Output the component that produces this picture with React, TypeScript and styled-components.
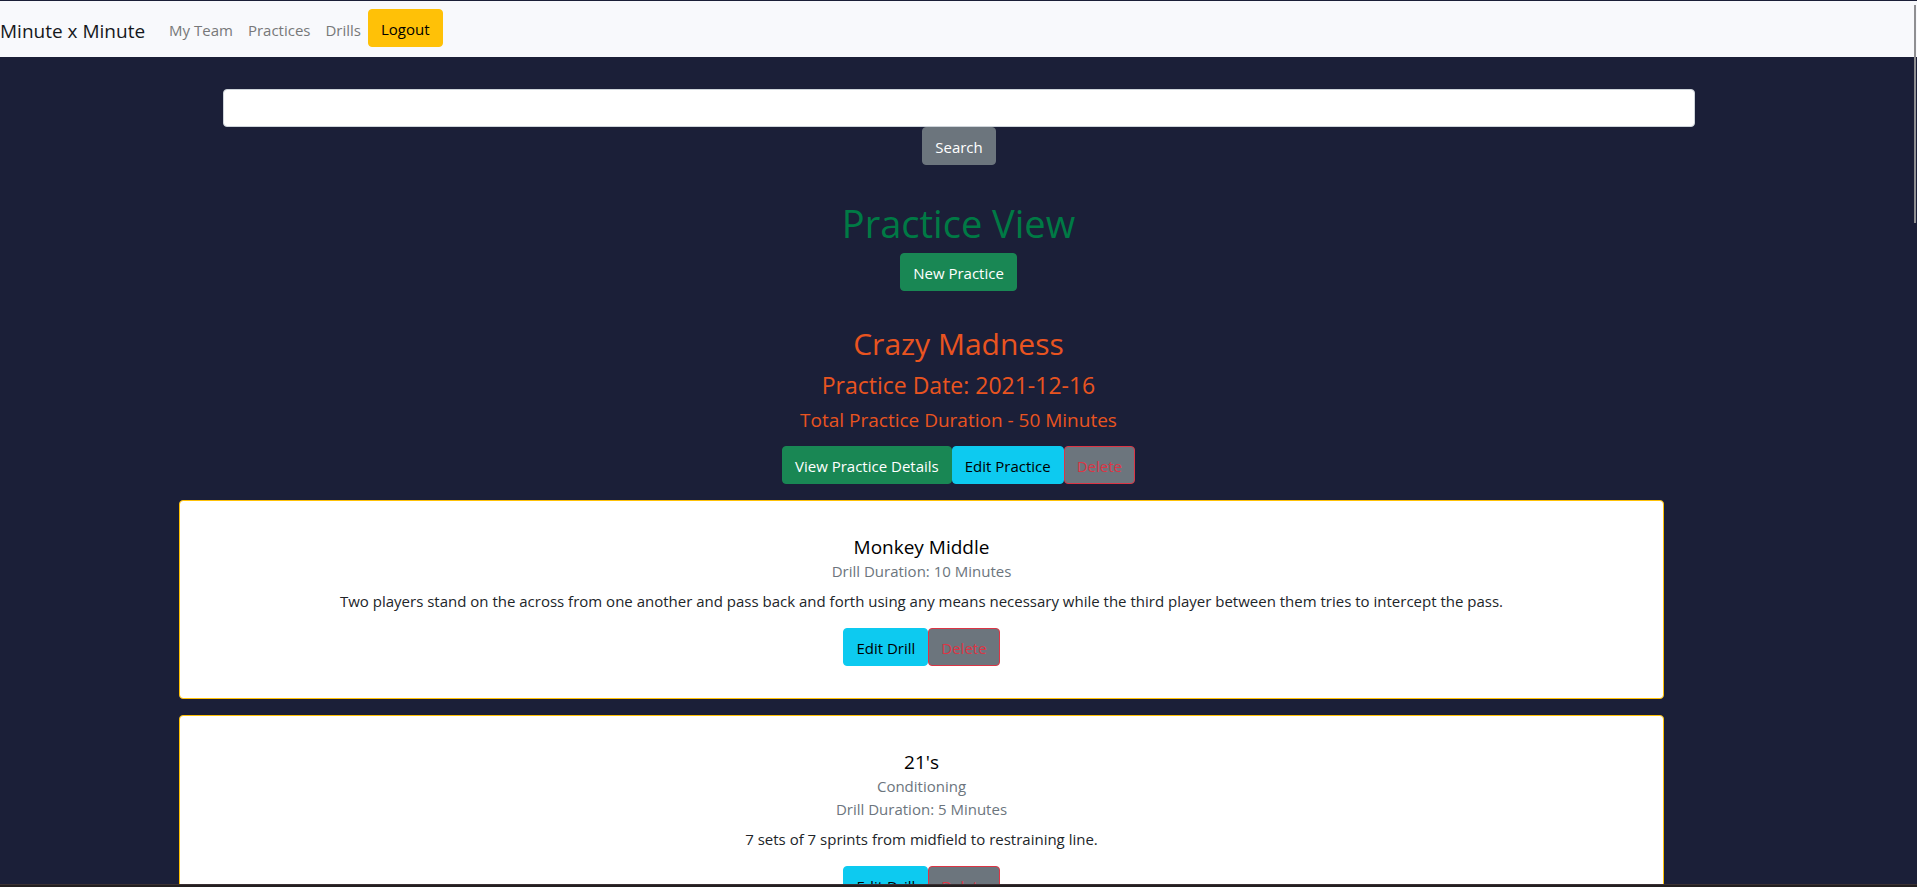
import React from "react";
import styled, { createGlobalStyle, css } from "styled-components";

const GlobalStyle = createGlobalStyle`
  *, *::before, *::after { box-sizing: border-box; }
  html, body { margin: 0; padding: 0; }
  body {
    background: #1b1f38;
    color: #212529;
    font-family: "Segoe UI", "Open Sans", "Noto Sans", sans-serif;
    font-size: 15px;
    line-height: 24px;
  }
`;

const Page = styled.div`
  position: relative;
  height: 100vh;
  overflow: hidden;
  border-top: 1px solid #1b1f38;
`;

const Navbar = styled.nav`
  display: flex;
  align-items: center;
  padding: 8px 0;
  background: #f8f9fc;
`;

const Brand = styled.a`
  margin-right: 16px;
  padding: 7px 0 3px;
  color: #16181b;
  font-size: 19px;
  line-height: 30px;
  text-decoration: none;
  white-space: nowrap;
`;

const NavList = styled.ul`
  display: flex;
  margin: 0;
  padding: 0;
  list-style: none;
`;

const NavLink = styled.a`
  display: block;
  padding: 9px 7px 7px 8px;
  color: #777879;
  text-decoration: none;
  white-space: nowrap;
`;

type Variant = "warning" | "secondary" | "success" | "info" | "danger";

const variants = {
  warning: css`background: #ffc107; border-color: #ffc107; color: #000;`,
  secondary: css`background: #6c757d; border-color: #6c757d; color: #fff;`,
  success: css`background: #198754; border-color: #198754; color: #fff;`,
  info: css`background: #0dcaf0; border-color: #0dcaf0; color: #000;`,
  danger: css`background: #6c757d; border-color: #dc3545; color: #dc3545;`,
};

const Button = styled.button<{ $variant: Variant }>`
  padding: 7px 12px 5px;
  border: 1px solid;
  border-radius: 4px;
  font: inherit;
  text-align: center;
  white-space: nowrap;
  cursor: pointer;
  ${({ $variant }) => variants[$variant]}
`;

const ButtonRow = styled.div`
  display: flex;
  justify-content: center;
`;

const SearchForm = styled.form`
  display: flex;
  flex-direction: column;
  align-items: center;
  padding: 32px 222px 32px 223px;
`;

const SearchInput = styled.input`
  width: 100%;
  padding: 6px 12px;
  border: 1px solid #ced4da;
  border-radius: 4px;
  background: #fff;
  color: #212529;
  font: inherit;
`;

const Title = styled.h1`
  margin: 0 0 6px;
  padding-top: 2px;
  color: #007a45;
  font-size: 38px;
  font-weight: 400;
  line-height: 48px;
  text-align: center;
`;

const Practice = styled.section`
  padding-top: 34px;
  color: #e95420;
  text-align: center;
`;

const PracticeName = styled.h2`
  margin: 0 0 8px;
  font-size: 30px;
  font-weight: 400;
  line-height: 38px;
`;

const PracticeDate = styled.h4`
  margin: 0 0 8px;
  font-size: 23px;
  font-weight: 400;
  line-height: 29px;
`;

const PracticeDuration = styled.h5`
  margin: 0 0 14px;
  font-size: 19px;
  font-weight: 400;
  line-height: 24px;
`;

const DrillList = styled.div`
  display: flex;
  flex-direction: column;
  gap: 16px;
  padding: 16px 253px 16px 179px;
`;

const DrillCard = styled.article`
  padding: 34px 32px 32px;
  border: 1px solid #ffc107;
  border-radius: 4px;
  background: #fff;
  text-align: center;
`;

const DrillTitle = styled.h5`
  margin: 0 0 3px;
  color: #000;
  font-size: 19px;
  font-weight: 400;
  line-height: 24px;
`;

const DrillMeta = styled.h6`
  margin: 0;
  color: #6c757d;
  font-size: 15px;
  font-weight: 400;
  line-height: 19px;

  & + & {
    margin-top: 4px;
  }
`;

const DrillText = styled.p`
  margin: 8px 0 15px;
  color: #212529;
`;

const ScrollThumb = styled.div`
  position: absolute;
  top: 4px;
  right: 1px;
  width: 2px;
  height: 218px;
  background: #8f8f92;
`;

const BottomEdge = styled.div`
  position: absolute;
  right: 0;
  bottom: 0;
  left: 0;
  height: 3px;
  border-top: 1px solid #3a3033;
  background: #231f20;
`;

const drills = [
  {
    name: "Monkey Middle",
    meta: ["Drill Duration: 10 Minutes"],
    text: "Two players stand on the across from one another and pass back and forth using any means necessary while the third player between them tries to intercept the pass.",
  },
  {
    name: "21's",
    meta: ["Conditioning", "Drill Duration: 5 Minutes"],
    text: "7 sets of 7 sprints from midfield to restraining line.",
  },
];

export default function App() {
  return (
    <Page>
      <GlobalStyle />
      <Navbar>
        <Brand href="#">Minute x Minute</Brand>
        <NavList>
          <li><NavLink href="#team">My Team</NavLink></li>
          <li><NavLink href="#practices">Practices</NavLink></li>
          <li><NavLink href="#drills">Drills</NavLink></li>
          <li><Button type="button" $variant="warning">Logout</Button></li>
        </NavList>
      </Navbar>
      <main>
        <SearchForm onSubmit={(e: React.FormEvent) => e.preventDefault()}>
          <SearchInput type="text" aria-label="Search" />
          <Button type="submit" $variant="secondary">Search</Button>
        </SearchForm>
        <Title>Practice View</Title>
        <ButtonRow>
          <Button type="button" $variant="success">New Practice</Button>
        </ButtonRow>
        <Practice>
          <PracticeName>Crazy Madness</PracticeName>
          <PracticeDate>Practice Date: 2021-12-16</PracticeDate>
          <PracticeDuration>Total Practice Duration - 50 Minutes</PracticeDuration>
          <ButtonRow>
            <Button type="button" $variant="success">View Practice Details</Button>
            <Button type="button" $variant="info">Edit Practice</Button>
            <Button type="button" $variant="danger">Delete</Button>
          </ButtonRow>
        </Practice>
        <DrillList>
          {drills.map((drill) => (
            <DrillCard key={drill.name}>
              <DrillTitle>{drill.name}</DrillTitle>
              {drill.meta.map((line) => (
                <DrillMeta key={line}>{line}</DrillMeta>
              ))}
              <DrillText>{drill.text}</DrillText>
              <ButtonRow>
                <Button type="button" $variant="info">Edit Drill</Button>
                <Button type="button" $variant="danger">Delete</Button>
              </ButtonRow>
            </DrillCard>
          ))}
        </DrillList>
      </main>
      <ScrollThumb />
      <BottomEdge />
    </Page>
  );
}
